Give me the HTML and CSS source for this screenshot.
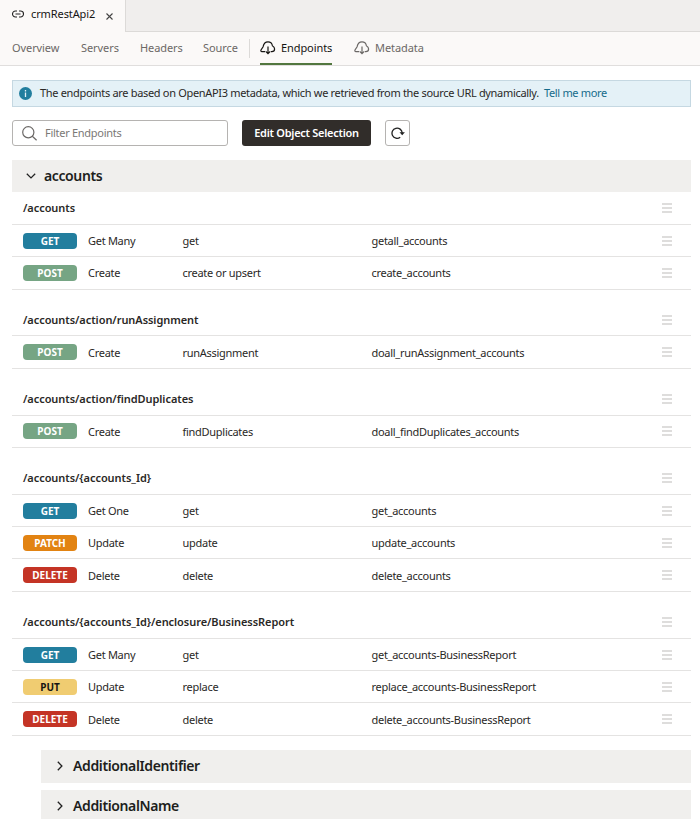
FILE: index.html
```
<!DOCTYPE html>
<html lang="en">
<head>
  <meta charset="UTF-8">
  <meta name="viewport" content="width=device-width, initial-scale=1.0">
  <title>crmRestApi2 - Endpoints</title>
  <link rel="stylesheet" href="styles.css">
</head>
<body>
  <svg class="symbols" width="0" height="0">
    <symbol id="menu" viewBox="0 0 10 10">
      <path d="M0 1h10M0 5h10M0 9h10" stroke="#dedddc" stroke-width="2" shape-rendering="crispEdges"/>
    </symbol>
    <symbol id="cloud" viewBox="0 0 16 14">
      <path d="M5 10.600H1.900C1 10.600.6 9.800 1 9l2.100-3.300C3.700 2.700 5.600.9 8 .9c2.300 0 4 1.500 4.400 3.800 1.400.8 2.200 1.900 2.200 3.200 0 1.600-1.200 2.700-2.800 2.700H11M8 5.500v7M5.700 10.300L8 12.600l2.300-2.300" fill="none" stroke="currentColor" stroke-width="1.200"/>
    </symbol>
  </svg>

  <div class="tab-bar">
    <div class="file-tab">
      <svg class="link-icon" width="12" height="8" viewBox="0 0 12 8" fill="none" stroke="#222" stroke-width="1.100">
        <path d="M5 1H3.500a3 3 0 0 0 0 6H5M7 1h1.500a3 3 0 0 1 0 6H7M3.500 4h5"/>
      </svg>
      <span class="file-name">crmRestApi2</span>
      <svg class="close-icon" width="7" height="7" viewBox="0 0 7 7" stroke="#444" stroke-width="1.100">
        <path d="M.5.5l6 6M6.500.5l-6 6"/>
      </svg>
    </div>
    <div class="tab-fill"></div>
  </div>

  <nav class="nav">
    <a class="nav-item overview">Overview</a>
    <a class="nav-item servers">Servers</a>
    <a class="nav-item headers">Headers</a>
    <a class="nav-item source">Source</a>
    <span class="nav-divider"></span>
    <a class="nav-item endpoints active"><svg width="16" height="14"><use href="#cloud"/></svg><span>Endpoints</span></a>
    <a class="nav-item metadata"><svg width="16" height="14"><use href="#cloud"/></svg><span>Metadata</span></a>
  </nav>

  <main class="content">
    <div class="info">
      <svg class="info-icon" width="13" height="13" viewBox="0 0 13 13">
        <circle cx="6.500" cy="6.500" r="6.500" fill="#227e9e"/>
        <path d="M6.500 3v1.400M6.500 5.500V10" stroke="#e4f1f7" stroke-width="1.300"/>
      </svg>
      <span class="info-text">The endpoints are based on OpenAPI3 metadata, which we retrieved from the source URL dynamically.</span>
      <a class="info-link">Tell me more</a>
    </div>

    <div class="toolbar">
      <div class="filter">
        <svg width="15" height="15" viewBox="0 0 15 15" fill="none" stroke="#6b6866" stroke-width="1.200">
          <circle cx="6.300" cy="6.300" r="5.600"/>
          <path d="M10.300 10.300l4.300 4"/>
        </svg>
        <span>Filter Endpoints</span>
      </div>
      <button class="edit-button"><span>Edit Object Selection</span></button>
      <button class="refresh-button">
        <svg width="14" height="14" viewBox="0 0 14 14">
          <path d="M9.200 11.300A5.100 5.100 0 1 1 11.200 7" fill="none" stroke="#222" stroke-width="1.300"/>
          <path d="M8.500 6.300h5.400l-2.700 3z" fill="#222"/>
        </svg>
      </button>
    </div>

    <div class="section-header">
      <svg width="10" height="6" viewBox="0 0 10 6"><path d="M.8.8L5 4.900 9.200.8" fill="none" stroke="#222" stroke-width="1.300"/></svg>
      <span>accounts</span>
    </div>

    <div class="group">
      <div class="row path"><span>/accounts</span><svg class="menu"><use href="#menu"/></svg></div>
      <div class="row"><span class="badge get">GET</span><span>Get Many</span><span>get</span><span>getall_accounts</span><svg class="menu"><use href="#menu"/></svg></div>
      <div class="row"><span class="badge post">POST</span><span>Create</span><span>create or upsert</span><span>create_accounts</span><svg class="menu"><use href="#menu"/></svg></div>
    </div>

    <div class="group">
      <div class="row path"><span>/accounts/action/runAssignment</span><svg class="menu"><use href="#menu"/></svg></div>
      <div class="row"><span class="badge post">POST</span><span>Create</span><span>runAssignment</span><span>doall_runAssignment_accounts</span><svg class="menu"><use href="#menu"/></svg></div>
    </div>

    <div class="group">
      <div class="row path"><span>/accounts/action/findDuplicates</span><svg class="menu"><use href="#menu"/></svg></div>
      <div class="row"><span class="badge post">POST</span><span>Create</span><span>findDuplicates</span><span>doall_findDuplicates_accounts</span><svg class="menu"><use href="#menu"/></svg></div>
    </div>

    <div class="group">
      <div class="row path"><span>/accounts/{accounts_Id}</span><svg class="menu"><use href="#menu"/></svg></div>
      <div class="row"><span class="badge get">GET</span><span>Get One</span><span>get</span><span>get_accounts</span><svg class="menu"><use href="#menu"/></svg></div>
      <div class="row"><span class="badge patch">PATCH</span><span>Update</span><span>update</span><span>update_accounts</span><svg class="menu"><use href="#menu"/></svg></div>
      <div class="row"><span class="badge delete">DELETE</span><span>Delete</span><span>delete</span><span>delete_accounts</span><svg class="menu"><use href="#menu"/></svg></div>
    </div>

    <div class="group">
      <div class="row path"><span>/accounts/{accounts_Id}/enclosure/BusinessReport</span><svg class="menu"><use href="#menu"/></svg></div>
      <div class="row"><span class="badge get">GET</span><span>Get Many</span><span>get</span><span>get_accounts-BusinessReport</span><svg class="menu"><use href="#menu"/></svg></div>
      <div class="row"><span class="badge put">PUT</span><span>Update</span><span>replace</span><span>replace_accounts-BusinessReport</span><svg class="menu"><use href="#menu"/></svg></div>
      <div class="row"><span class="badge delete">DELETE</span><span>Delete</span><span>delete</span><span>delete_accounts-BusinessReport</span><svg class="menu"><use href="#menu"/></svg></div>
    </div>

    <div class="section-header nested">
      <svg width="6" height="10" viewBox="0 0 6 10"><path d="M.8.8L4.900 5 .8 9.200" fill="none" stroke="#222" stroke-width="1.300"/></svg>
      <span>AdditionalIdentifier</span>
    </div>
    <div class="section-header nested">
      <svg width="6" height="10" viewBox="0 0 6 10"><path d="M.8.8L4.900 5 .8 9.200" fill="none" stroke="#222" stroke-width="1.300"/></svg>
      <span>AdditionalName</span>
    </div>
  </main>
</body>
</html>
```
FILE: styles.css
```
* {
  margin: 0;
  padding: 0;
  box-sizing: border-box;
}

body {
  font-family: "Noto Sans", "Open Sans", sans-serif;
  font-size: 11px;
  letter-spacing: -0.28px;
  color: #2a2826;
  background-color: #fff;
  height: 100vh;
  overflow: hidden;
  white-space: nowrap;
}

svg {
  display: block;
  flex-shrink: 0;
}

.symbols {
  position: absolute;
}

.tab-bar {
  display: flex;
  height: 32px;
  background-color: #fbf9f8;
}

.file-tab {
  display: flex;
  align-items: center;
  width: 125px;
  padding: 0 0 4px 12px;
}

.file-name {
  width: 75px;
  margin-left: 7px;
  padding-bottom: 1px;
  letter-spacing: -0.1px;
  color: #161513;
}

.close-icon {
  margin-top: 4px;
}

.tab-fill {
  flex: 1;
  background-color: #f0eeed;
  border-left: 1px solid #dcdad8;
  border-bottom: 1px solid #dcdad8;
}

.nav {
  display: flex;
  align-items: center;
  height: 34px;
  padding-left: 12px;
  letter-spacing: -0.08px;
  background-color: #fbf9f8;
  border-bottom: 1px solid #e0dedd;
}

.nav-item {
  display: flex;
  align-items: center;
  height: 33px;
  color: #6b6866;
  border-bottom: 2px solid transparent;
}

.nav-item svg {
  margin: 1px 5px 0 0;
}

.overview {
  width: 69px;
}

.servers {
  width: 59px;
}

.headers {
  width: 63px;
}

.source {
  width: 46px;
}

.nav-divider {
  width: 1px;
  height: 19px;
  margin-right: 10px;
  background-color: #dcdad8;
}

.endpoints {
  width: 72px;
  margin-right: 22px;
}

.nav-item.active {
  color: #161513;
  border-color: #52773f;
}

.content {
  padding: 14px 9px 0 12px;
}

.info {
  display: flex;
  align-items: center;
  height: 27px;
  padding-left: 6px;
  background-color: #e4f1f7;
  border: 1px solid #c5d8e2;
}

.info-text {
  width: 504px;
  margin-left: 8px;
  padding-bottom: 2px;
  letter-spacing: -0.32px;
}

.info-link {
  padding-bottom: 2px;
  letter-spacing: -0.34px;
  color: #156b8a;
}

.toolbar {
  display: flex;
  margin: 13px 0 14px;
}

.filter {
  display: flex;
  align-items: center;
  width: 216px;
  height: 26px;
  padding-left: 9px;
  color: #7b7876;
  border: 1px solid #b5b3b1;
  border-radius: 3px;
}

.filter span {
  margin-left: 8px;
  padding-bottom: 2px;
}

button {
  display: flex;
  align-items: center;
  justify-content: center;
  height: 26px;
  font: inherit;
  letter-spacing: inherit;
  border-radius: 3px;
}

.edit-button {
  width: 129px;
  margin: 0 14px;
  padding-bottom: 2px;
  color: #fff;
  font-weight: 600;
  background-color: #312d2a;
  border: none;
}

.refresh-button {
  width: 25px;
  background-color: #fff;
  border: 1px solid #b5b3b1;
}

.section-header {
  display: flex;
  align-items: center;
  height: 32px;
  margin-bottom: 0.5px;
  padding-left: 14px;
  font-size: 14px;
  font-weight: 600;
  letter-spacing: -0.38px;
  color: #201e1c;
  background-color: #f0efed;
}

.section-header span {
  margin-left: 8px;
  padding-bottom: 2px;
}

.group + .group {
  margin-top: 14.4px;
}

.row {
  display: grid;
  grid-template-columns: 65px 94.5px 189px 1fr 10px;
  align-items: center;
  height: 32.38px;
  padding: 0 19px 0 11px;
  border-bottom: 1px solid #e4e3e2;
}

.row.path {
  grid-template-columns: 1fr 10px;
  font-weight: 600;
  letter-spacing: -0.06px;
}

.row.path span {
  padding-bottom: 0.5px;
}

.menu {
  width: 10px;
  height: 10px;
  margin-top: 0.5px;
}

.badge {
  width: 54px;
  height: 16px;
  margin-top: 0.5px;
  font-size: 10px;
  font-weight: 700;
  letter-spacing: 0;
  line-height: 16px;
  text-align: center;
  color: #fff;
  border-radius: 4px;
}

.get {
  background-color: #227e9e;
}

.post {
  background-color: #76a584;
}

.patch {
  background-color: #e28312;
}

.delete {
  background-color: #c43425;
}

.put {
  color: #161513;
  background-color: #f0cc71;
}

.nested {
  height: 33px;
  margin: 14px 0 0 29px;
  padding-left: 16px;
}

.nested span {
  margin-left: 10px;
}

.nested + .nested {
  margin-top: 7px;
}
```
